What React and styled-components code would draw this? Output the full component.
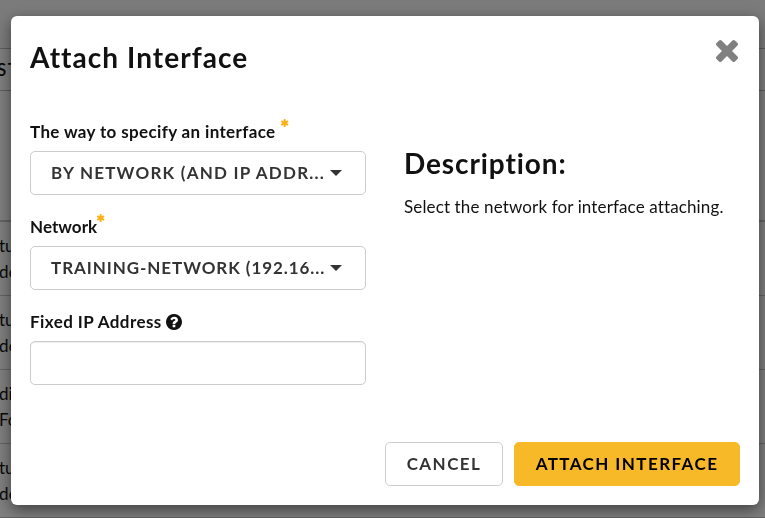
import React from "react";
import styled, { createGlobalStyle } from "styled-components";

const GlobalStyle = createGlobalStyle`
  * { box-sizing: border-box; }
  body { margin: 0; overflow: hidden; background: #fff; color: #111; font: 17px/26px Lato, "Open Sans", sans-serif; font-variant-ligatures: none; }
  h2, h3, p { margin: 0; }
`;

const Page = styled.div`
  height: 518px;
  overflow: hidden;
`;
const TopBar = styled.div`
  height: 48px;
  background: #f7f7f7;
`;
const TableHead = styled.div`
  height: 43px;
  border-top: 1px solid #bbb;
  border-bottom: 1px solid #bbb;
  line-height: 41px;
  text-indent: -3px;
  font-weight: 600;
  letter-spacing: 1.5px;
`;
const TableRow = styled.div`
  height: ${(p) => p.$height}px;
  padding-top: ${(p) => p.$pad || 0}px;
  border-bottom: ${(p) => p.$line || 1}px solid #c8c8c8;
  white-space: nowrap;
`;
const Cell = styled.div`
  margin-left: -1px;
`;
const Backdrop = styled.div`
  position: fixed;
  inset: 0;
  padding: 16px 6px 13px 11px;
  background: rgba(0, 0, 0, 0.5);
`;
const Dialog = styled.section`
  display: flex;
  flex-direction: column;
  height: 489px;
  border-radius: 6px;
  background: #fff;
  box-shadow: 0 5px 15px rgba(0, 0, 0, 0.5);
`;
const Header = styled.header`
  display: flex;
  justify-content: space-between;
  align-items: flex-start;
  height: 103px;
  padding: 24px 21px 0 19px;
`;
const Title = styled.h2`
  font-size: 28px;
  line-height: 34px;
  font-weight: 700;
  letter-spacing: ${(p) => p.$track || 0}px;
  white-space: nowrap;
`;
const CloseButton = styled.button`
  display: flex;
  padding: 0;
  border: 0;
  background: none;
  color: #808080;
`;
const Body = styled.div`
  display: grid;
  grid-template-columns: 336px 1fr;
  column-gap: 38px;
  height: 323px;
  padding: 0 19px;
`;
const Field = styled.div`
  height: 95px;
`;
const Label = styled.label`
  display: flex;
  align-items: center;
  height: 26px;
  margin-bottom: 6px;
  font-size: 17px;
  font-weight: 700;
  letter-spacing: ${(p) => p.$track || 0}px;
  white-space: nowrap;
`;
const Required = styled.span`
  display: flex;
  margin: 0 0 18px ${(p) => p.$gap || 0}px;
  color: #fbb116;
`;
const Help = styled.span`
  display: flex;
  margin-left: 4px;
`;
const Select = styled.button`
  display: flex;
  align-items: center;
  width: 336px;
  height: 44px;
  padding: 0 0 0 20px;
  border: 1px solid #ccc;
  border-radius: 5px;
  background: #fff;
  color: #333;
  font: 700 17px/24px Lato, "Open Sans", sans-serif;
  letter-spacing: ${(p) => p.$track}px;
`;
const Value = styled.span`
  width: 279px;
  text-align: left;
  white-space: nowrap;
`;
const Caret = styled.span`
  border: 6px solid transparent;
  border-width: 6px 6px 0;
  border-top-color: #333;
`;
const Input = styled.input`
  display: block;
  width: 336px;
  height: 44px;
  border: 1px solid #ccc;
  border-radius: 5px;
  background: #fff;
  box-shadow: inset 0 1px 1px rgba(0, 0, 0, 0.075);
`;
const Description = styled.div`
  padding-top: 27px;
`;
const Text = styled.p`
  margin-top: 14px;
  font-size: 17px;
  letter-spacing: 0.13px;
  white-space: nowrap;
`;
const Footer = styled.footer`
  display: flex;
  justify-content: flex-end;
  gap: 11px;
  padding-right: 19px;
`;
const Button = styled.button`
  width: ${(p) => p.$width}px;
  height: 44px;
  padding: 0;
  border: 1px solid ${(p) => (p.$primary ? "#f8b928" : "#ccc")};
  border-radius: 5px;
  background: ${(p) => (p.$primary ? "#f8b928" : "#fff")};
  color: ${(p) => (p.$primary ? "#000" : "#333")};
  font: 700 17px/24px Lato, "Open Sans", sans-serif;
  letter-spacing: ${(p) => p.$track}px;
  white-space: nowrap;
`;

const CloseIcon = () => (
  <svg width="22" height="22" viewBox="110 366 1188 1188" fill="currentColor">
    <path d="M1298 1322q0 40-28 68l-136 136q-28 28-68 28t-68-28l-294-294-294 294q-28 28-68 28t-68-28l-136-136q-28-28-28-68t28-68l294-294-294-294q-28-28-28-68t28-68l136-136q28-28 68-28t68 28l294 294 294-294q28-28 68-28t68 28l136 136q28 28 28 68t-28 68l-294 294 294 294q28 28 28 68z" />
  </svg>
);
const Asterisk = () => (
  <svg width="8" height="8" viewBox="128 128 1536 1536" fill="currentColor">
    <path d="M1482 1050q46 26 59.500 77.500t-12.500 97.500l-64 110q-26 46-77.500 59.500t-97.500-12.500l-266-153v307q0 52-38 90t-90 38h-128q-52 0-90-38t-38-90v-307l-266 153q-46 26-97.500 12.500t-77.500-59.500l-64-110q-26-46-12.500-97.500t59.500-77.500l266-154-266-154q-46-26-59.500-77.500t12.500-97.500l64-110q26-46 77.500-59.500t97.500 12.500l266 153v-307q0-52 38-90t90-38h128q52 0 90 38t38 90v307l266-153q46-26 97.500-12.500t77.500 59.500l64 110q26 46 12.500 97.500t-59.500 77.500l-266 154z" />
  </svg>
);
const HelpIcon = () => (
  <svg width="16" height="16" viewBox="128 128 1536 1536" fill="currentColor">
    <path d="M1024 1376v-192q0-14-9-23t-23-9h-192q-14 0-23 9t-9 23v192q0 14 9 23t23 9h192q14 0 23-9t9-23zm256-672q0-88-55.500-163t-138.500-116-170-41q-243 0-371 213-15 24 8 42l132 100q7 6 19 6 16 0 25-12 53-68 86-92 34-24 86-24 48 0 85.500 26t37.500 59q0 38-20 61t-68 45q-63 28-115.500 86.500t-52.500 125.500v36q0 14 9 23t23 9h192q14 0 23-9t9-23q0-19 21.500-49.500t54.500-49.500q32-18 49-28.500t46-35 44.500-48 28-60.500 12.500-81zm384 192q0 209-103 385.500t-279.500 279.500-385.500 103-385.500-103-279.500-279.500-103-385.500 103-385.500 279.500-279.500 385.500-103 385.500 103 279.500 279.500 103 385.500z" />
  </svg>
);

const rows = [
  { height: 74, pad: 11, lines: ["tu", "d6"] },
  { height: 74, pad: 11, lines: ["tu", "d6"] },
  { height: 74, pad: 11, lines: ["di", "Fo"] },
  { height: 74, pad: 11, lines: ["tu", "d6"] },
];

export default function App() {
  return (
    <>
      <GlobalStyle />
      <Page>
        <TopBar />
        <TableHead>ST</TableHead>
        <TableRow $height={131} $line={2} />
        {rows.map((row, i) => (
          <TableRow key={i} $height={row.height} $pad={row.pad}>
            {row.lines.map((line) => (
              <Cell key={line}>{line}</Cell>
            ))}
          </TableRow>
        ))}
      </Page>
      <Backdrop>
        <Dialog role="dialog">
          <Header>
            <Title $track={1.05}>Attach Interface</Title>
            <CloseButton aria-label="Close"><CloseIcon /></CloseButton>
          </Header>
          <Body>
            <div>
              <Field>
                <Label $track={0.36}>The way to specify an interface<Required $gap={5}><Asterisk /></Required></Label>
                <Select $track={1.22}><Value>BY NETWORK (AND IP ADDR...</Value><Caret /></Select>
              </Field>
              <Field>
                <Label $track={0.05}>Network<Required><Asterisk /></Required></Label>
                <Select $track={0.93}><Value>TRAINING-NETWORK (192.16...</Value><Caret /></Select>
              </Field>
              <Field>
                <Label $track={0.42}>Fixed IP Address<Help><HelpIcon /></Help></Label>
                <Input />
              </Field>
            </div>
            <Description>
              <Title as="h3" $track={0.9}>Description:</Title>
              <Text>Select the network for interface attaching.</Text>
            </Description>
          </Body>
          <Footer>
            <Button $width={118} $track={1.45}>CANCEL</Button>
            <Button $width={226} $track={1.43} $primary>ATTACH INTERFACE</Button>
          </Footer>
        </Dialog>
      </Backdrop>
    </>
  );
}
